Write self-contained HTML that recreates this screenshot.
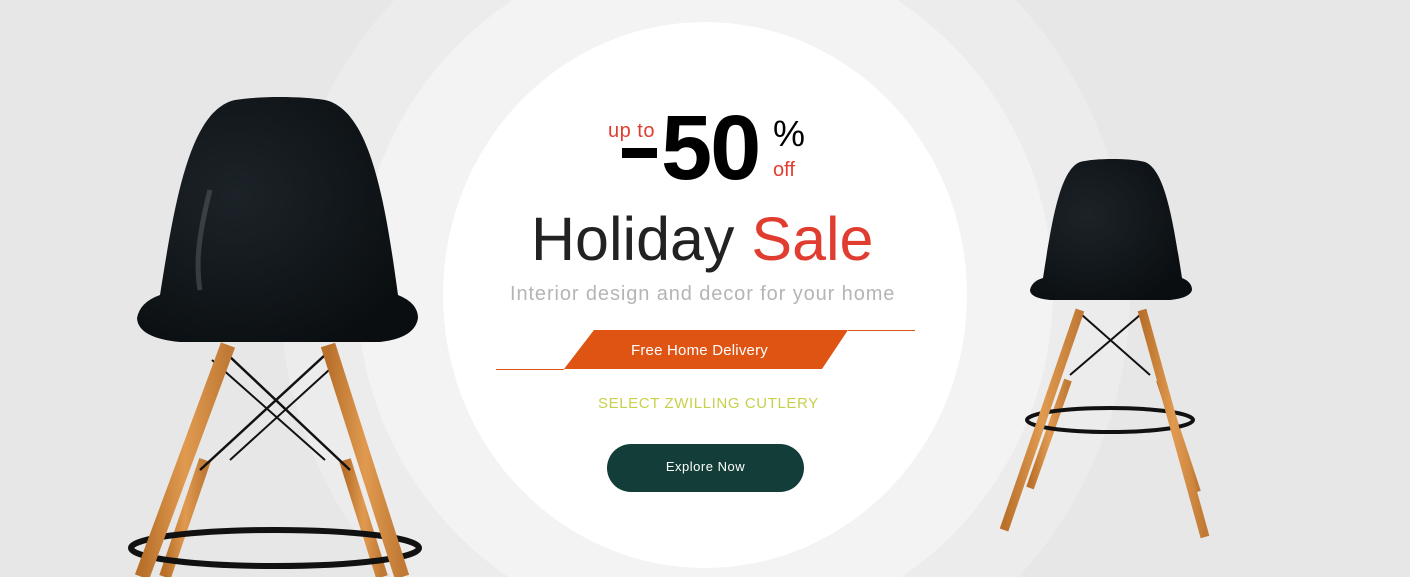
<!DOCTYPE html>
<html><head><meta charset="utf-8"><style>
html,body{margin:0;padding:0;width:1410px;height:577px;overflow:hidden}
body{font-family:"Liberation Sans",sans-serif}
#w0{position:relative;width:1410px;height:577px;overflow:hidden;background:#e7e7e7}
.c0{position:absolute;left:280px;top:-135px;width:850px;height:850px;border-radius:50%;background:#ececec}
.c1{position:absolute;left:357px;top:-58px;width:696px;height:696px;border-radius:50%;background:#f3f3f3}
.c2{position:absolute;left:443px;top:22px;width:524px;height:546px;border-radius:50%;background:#fff}
svg{position:absolute;left:0;top:0}
.t{position:absolute;white-space:nowrap}
</style></head><body><div id="w0">
<div class="c0"></div><div class="c1"></div><div class="c2"></div>
<svg width="1410" height="577">
<defs>
<linearGradient id="w" x1="0" x2="1"><stop offset="0" stop-color="#b8702a"/><stop offset=".5" stop-color="#e09a50"/><stop offset="1" stop-color="#c07a35"/></linearGradient>
<radialGradient id="s" cx=".35" cy=".4" r=".7"><stop offset="0" stop-color="#1c2328"/><stop offset="1" stop-color="#0a0e11"/></radialGradient>
</defs>
<g>
<path d="M205 460 L165 577" stroke="url(#w)" stroke-width="12"/>
<path d="M345 460 L382 577" stroke="url(#w)" stroke-width="12"/>
<path d="M228 355 L350 470 M325 355 L200 470" stroke="#111" stroke-width="2.5"/>
<path d="M212 360 L325 460 M340 360 L230 460" stroke="#111" stroke-width="2"/>
<ellipse cx="275" cy="548" rx="144" ry="18" fill="none" stroke="#111" stroke-width="6"/>
<path d="M228 345 L142 577" stroke="url(#w)" stroke-width="15"/>
<path d="M328 345 L402 577" stroke="url(#w)" stroke-width="15"/>
<path d="M160 295 C175 200 190 110 235 100 C260 96 300 96 325 100 C370 110 385 200 398 295 Q418 303 418 318 Q415 338 380 342 L180 342 Q138 338 137 318 Q140 302 160 295 Z" fill="url(#s)"/>
<path d="M210 190 C200 230 195 260 200 290" stroke="#5a6268" stroke-width="5" fill="none" opacity=".5"/>
</g>
<g>
<path d="M1068 380 L1030 488" stroke="url(#w)" stroke-width="8"/>
<path d="M1160 380 L1197 492" stroke="url(#w)" stroke-width="8"/>
<path d="M1082 315 L1150 375 M1140 315 L1070 375" stroke="#111" stroke-width="2"/>
<ellipse cx="1110" cy="420" rx="83" ry="12" fill="none" stroke="#111" stroke-width="4"/>
<path d="M1080 310 L1004 530" stroke="url(#w)" stroke-width="9"/>
<path d="M1142 310 L1205 537" stroke="url(#w)" stroke-width="9"/>
<path d="M1043 278 C1052 220 1060 170 1080 162 C1095 158 1130 158 1145 162 C1165 170 1173 220 1182 278 Q1192 282 1192 290 Q1190 298 1170 300 L1050 300 Q1030 298 1030 290 Q1032 281 1043 278 Z" fill="url(#s)"/>
</g>
<polygon points="594,330 848,330 822,369 564,369" fill="#e05413"/>
<line x1="848" y1="330.5" x2="915" y2="330.5" stroke="#e05413" stroke-width="1"/>
<line x1="496" y1="369.5" x2="564" y2="369.5" stroke="#e05413" stroke-width="1"/>
<rect x="622" y="148" width="35" height="10" fill="#000"/>
</svg>
<div class="t" style="left:608px;top:120px;font-size:20px;color:#e03d30;letter-spacing:.5px">up to</div>
<div class="t" style="left:661px;top:102px;font-size:92px;font-weight:bold;color:#000;letter-spacing:-2px;line-height:92px">50</div>
<div class="t" style="left:773px;top:112px;font-size:36px;color:#000;line-height:44px">%</div>
<div class="t" style="left:773px;top:159px;font-size:20px;color:#e03d30">off</div>
<div class="t" style="left:531px;top:204px;font-size:61px;color:#222;line-height:70px">Holiday <span style="color:#e03d30">Sale</span></div>
<div class="t" style="left:510px;top:283px;font-size:20px;color:#b5b5b5;letter-spacing:.9px">Interior design and decor for your home</div>
<div class="t" style="left:631px;top:342px;font-size:15px;color:#fff;letter-spacing:.2px">Free Home Delivery</div>
<div class="t" style="left:598px;top:395px;font-size:15px;color:#c8d04a;letter-spacing:.6px">SELECT ZWILLING CUTLERY</div>
<div class="t" style="left:607px;top:444px;width:197px;height:48px;border-radius:24px;background:#123d38;color:#fff;font-size:13px;text-align:center;line-height:46px;letter-spacing:.5px">Explore Now</div>
</div></body></html>
